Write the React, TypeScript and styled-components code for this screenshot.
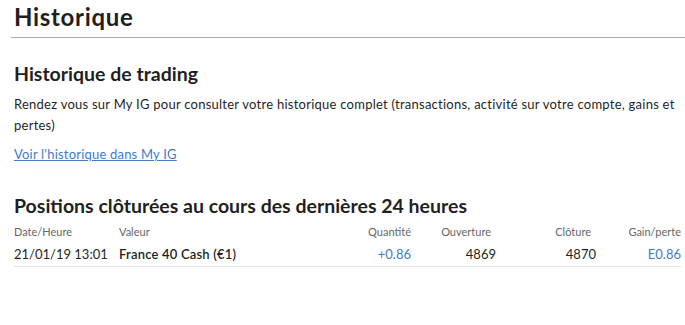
import React from 'react';
import styled, { createGlobalStyle } from 'styled-components';

const GlobalStyle = createGlobalStyle`
  html, body {
    margin: 0;
    padding: 0;
    background: #fff;
  }
  body {
    font-family: Lato, "Open Sans", sans-serif;
    color: #1f1f1f;
  }
`;

const Panel = styled.div`
  position: relative;
  width: 685px;
  height: 325px;
  overflow: hidden;
  padding-left: 14px;
  box-sizing: border-box;
`;

const CloseMark = styled.span`
  position: absolute;
  top: -13px;
  right: 8px;
  font-size: 14px;
  color: #aaa;
`;

const Title = styled.h1`
  margin: 0;
  padding-top: 2px;
  font-size: 24px;
  font-weight: 700;
  letter-spacing: 0.7px;
  line-height: 30px;
  height: 35px;
  border-bottom: 1px solid #aaa;
  margin-left: -3px;
  padding-left: 3px;
`;

const Section = styled.section<{ $top: number }>`
  margin-top: ${(p) => p.$top}px;
`;

const Heading = styled.h2<{ $gap: number }>`
  margin: 0 0 ${(p) => p.$gap}px;
  font-size: 19.5px;
  font-weight: 700;
  line-height: 24px;
`;

const Text = styled.p`
  margin: 0;
  font-size: 13px;
  letter-spacing: 0.25px;
  line-height: 21px;
  padding-right: 6px;
`;

const Link = styled.a`
  display: inline-block;
  margin-top: 10px;
  font-size: 13px;
  letter-spacing: 0.2px;
  color: #3f7bc6;
  text-decoration: underline;
`;

const Table = styled.div`
  display: grid;
  grid-template-columns: 105px 1fr 70px 85px 100px 85px;
  padding-right: 4px;
`;

const HeadCell = styled.div<{ $right?: boolean; $pad?: number }>`
  font-size: 11px;
  color: #666;
  text-align: ${(p) => (p.$right ? 'right' : 'left')};
  padding-right: ${(p) => p.$pad ?? 0}px;
  line-height: 16px;
`;

const Cell = styled.div<{ $right?: boolean; $blue?: boolean; $bold?: boolean }>`
  font-size: 13px;
  line-height: 24px;
  padding-top: 2px;
  padding-bottom: 0;
  border-bottom: 1px solid #e6e6e6;
  text-align: ${(p) => (p.$right ? 'right' : 'left')};
  color: ${(p) => (p.$blue ? '#3f7bc6' : '#1f1f1f')};
  font-weight: ${(p) => (p.$bold ? 600 : 400)};
  letter-spacing: ${(p) => (p.$bold ? '0.2px' : '0')};
`;

const App: React.FC = () => {
  return (
    <Panel>
      <GlobalStyle />
      <CloseMark>✕</CloseMark>
      <Title>Historique</Title>
      <Section $top={24}>
        <Heading $gap={8}>Historique de trading</Heading>
        <Text>
          Rendez vous sur My IG pour consulter votre historique complet (transactions, activité sur
          votre compte, gains et pertes)
        </Text>
        <Link href='#'>Voir l'historique dans My IG</Link>
      </Section>
      <Section $top={32}>
        <Heading $gap={6}>Positions clôturées au cours des dernières 24 heures</Heading>
        <Table>
          <HeadCell>Date/Heure</HeadCell>
          <HeadCell>Valeur</HeadCell>
          <HeadCell $right>Quantité</HeadCell>
          <HeadCell $right $pad={5}>Ouverture</HeadCell>
          <HeadCell $right $pad={5}>Clôture</HeadCell>
          <HeadCell $right>Gain/perte</HeadCell>
          <Cell>21/01/19 13:01</Cell>
          <Cell $bold>France 40 Cash (€1)</Cell>
          <Cell $right $blue>+0.86</Cell>
          <Cell $right>4869</Cell>
          <Cell $right>4870</Cell>
          <Cell $right $blue>E0.86</Cell>
        </Table>
      </Section>
    </Panel>
  );
};

export default App;
